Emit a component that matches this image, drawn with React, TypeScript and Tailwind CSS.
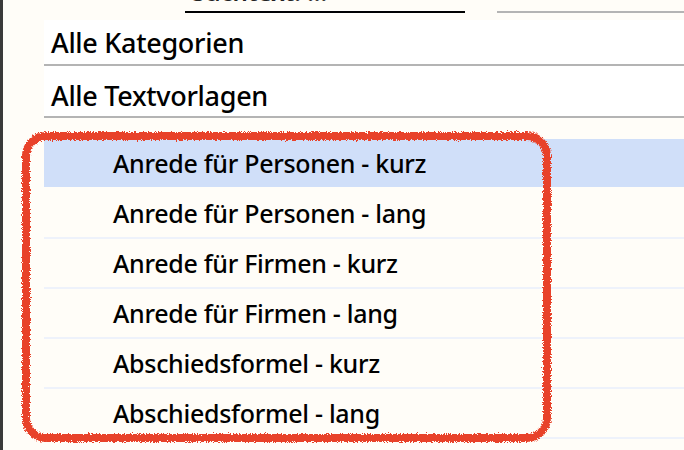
import React from "react";

const items = [
  "Anrede für Personen - kurz",
  "Anrede für Personen - lang",
  "Anrede für Firmen - kurz",
  "Anrede für Firmen - lang",
  "Abschiedsformel - kurz",
  "Abschiedsformel - lang",
];

export default function App() {
  return (
    <div
      className="relative flex h-[450px] w-[684px] overflow-hidden bg-[#fffdf8] text-black"
      style={{ fontFamily: '"Noto Sans", "Open Sans", sans-serif' }}
    >
      <div className="w-[3px] shrink-0 bg-[#3a3a3a]" />
      <div className="flex min-w-0 flex-1 flex-col">
        {/* top search bar */}
        <div className="flex h-[20px] shrink-0 items-start">
          <div className="ml-[182px] h-[13px] w-[280px] overflow-hidden border-b-2 border-black">
            <div className="-mt-[23px] pl-[7px] text-[24px] font-semibold leading-[30px] text-[#222]">
              Suchtext: ...
            </div>
          </div>
          <div className="ml-[32px] h-[13px] flex-1 border-b-2 border-[#b4b4b4]" />
        </div>
        <div className="ml-[41px] flex flex-col">
          <div className="flex h-[46px] items-center border-b-2 border-[#b4b4b4] bg-white pl-[7px] text-[27px] font-medium leading-none tracking-[-0.3px]">
            Alle Kategorien
          </div>
          <div className="flex h-[52px] items-center border-b-2 border-[#b4b4b4] bg-white pl-[7px] pt-[8px] text-[27px] font-medium leading-none tracking-[-0.3px]">
            Alle Textvorlagen
          </div>
          <div className="mt-[21px] flex flex-col">
            {items.map((t, i) => (
              <div
                key={t}
                className={
                  i === 0
                    ? "flex h-[50px] items-center border-b-2 border-[#fffdf8] bg-[#d0dff9] pl-[69px] text-[25px] font-medium leading-none tracking-[-0.3px]"
                    : "flex h-[50px] items-center border-b-2 border-[#eef2fb] pl-[69px] text-[25px] font-medium leading-none tracking-[-0.3px]"
                }
              >
                {t}
              </div>
            ))}
          </div>
        </div>
      </div>

      {/* red hand-drawn annotation */}
      <svg
        className="pointer-events-none absolute left-0 top-0"
        width="684"
        height="450"
        viewBox="0 0 684 450"
      >
        <defs>
          <filter id="rough" x="-5%" y="-5%" width="110%" height="110%">
            <feTurbulence type="fractalNoise" baseFrequency="1.2" numOctaves="2" seed="3" result="n" />
            <feDisplacementMap in="SourceGraphic" in2="n" scale="5" xChannelSelector="R" yChannelSelector="G" />
          </filter>
        </defs>
        <rect
          x="26"
          y="136"
          width="521"
          height="302"
          rx="20"
          ry="20"
          fill="none"
          stroke="#e8432a"
          strokeWidth="8"
          filter="url(#rough)"
        />
      </svg>
    </div>
  );
}
